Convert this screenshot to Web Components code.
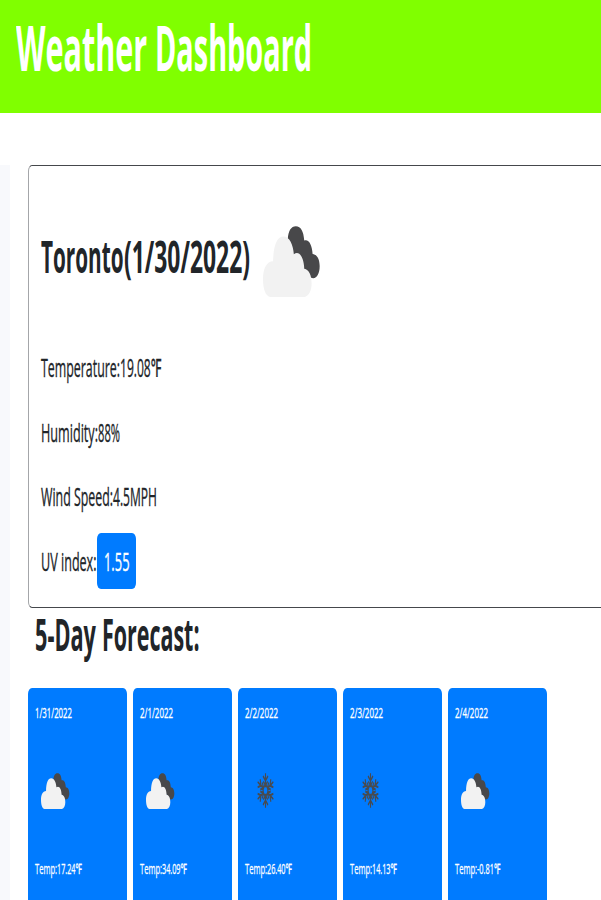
<!DOCTYPE html>
<html lang="en">
<head>
<meta charset="utf-8">
<title>Weather Dashboard</title>
<style>
html,body{margin:0;height:900px;overflow:hidden;background:#fff}
body{font-family:"Open Sans","Noto Sans",sans-serif;color:#212529}
</style>
</head>
<body>
<weather-app></weather-app>
<script>
const define = (name, html, ready) => customElements.define(name, class extends HTMLElement {
  constructor() {
    super();
    const t = document.createElement('template');
    t.innerHTML = html;
    this.attachShadow({mode: 'open'}).append(t.content.cloneNode(true));
  }
  connectedCallback() { if (ready) ready(this, this.shadowRoot); }
});

// Condensed one-line text: each "|"-separated part is scaled to its width in "w".
define('narrow-text', `<style>
:host{display:flex;white-space:pre;flex:none}
div{flex:none}
span{display:inline-block;transform-origin:0 50%}
</style>`, (el, root) => {
  const widths = el.getAttribute('w').split(',');
  el.getAttribute('text').split('|').forEach((part, i) => {
    const box = document.createElement('div');
    const s = document.createElement('span');
    s.textContent = part;
    box.append(s);
    root.append(box);
    const natural = s.getBoundingClientRect().width;
    box.style.width = widths[i] + 'px';
    s.style.transform = 'scaleX(' + widths[i] / natural + ')';
  });
});

define('cloud-icon', `<style>
:host{display:block;flex:none;width:28.5px;height:36px}svg{display:block;width:100%;height:100%}
</style><svg viewBox="24 33 170 211" preserveAspectRatio="none">
<path fill="#48484a" d="M98 72C99 48 108 34 122 34C137 34 145 49 147 76C160 71 170 87 172 116C185 117 193 132 193 152C193 174 185 188 174 188C163 188 159 179 155 166L100 130Z"/>
<path fill="#f2f2f2" d="M45 244C31 241 24 220 24 190C24 160 35 138 54 138C55 90 66 64 85 64C103 64 114 88 116 117C132 105 146 125 147 160C161 162 169 179 169 204C169 225 161 240 149 244Z"/></svg>`);

define('snow-icon', `<style>
:host{display:block;flex:none;width:17px;height:35px}svg{display:block;width:100%;height:100%}
</style><svg viewBox="-48 -52 96 104" preserveAspectRatio="none"><defs>
<path id="arm" d="M0 -12V-51M0 -29L-14 -43M0 -29L14 -43M0 -14L-12 -27M0 -14L12 -27M-8 -13H8"/></defs>
<g fill="none" stroke="#484b50" stroke-width="6.2"><use href="#arm"/><use href="#arm" transform="rotate(60)"/><use href="#arm" transform="rotate(120)"/><use href="#arm" transform="rotate(180)"/><use href="#arm" transform="rotate(240)"/><use href="#arm" transform="rotate(300)"/></g></svg>`);

define('page-header', `<style>
:host{display:block;box-sizing:border-box;height:113px;padding:0 0 0 16px;background:#80ff00;color:#fff;font-weight:700;font-size:63px;line-height:94px}
</style><slot></slot>`);

define('current-weather', `<style>
:host{display:block;box-sizing:border-box;width:700px;height:442.5px;padding:10px 0 0 12px;border:1px solid #a4a6a9;border-top-color:#45484c;border-bottom-color:#45484c;border-radius:4px/6px;font-size:25px;font-weight:500;line-height:64.5px;-webkit-text-stroke:.35px}
.head{display:flex;align-items:center;height:159px;font-size:44px;font-weight:700;line-height:72px;-webkit-text-stroke:0}
cloud-icon{width:57px;height:71px;margin:12px 0 0 13.5px}
.uv{display:flex;align-items:center}
.badge{box-sizing:border-box;width:38.5px;height:56px;line-height:57px;padding-left:7px;margin-left:.5px;border-radius:4px/6px;background:#007bff;color:#fff}
</style>
<div class="head"><narrow-text w="82.5,126" text="Toronto|(1/30/2022)"></narrow-text><cloud-icon></cloud-icon></div>
<narrow-text w="79,41.5" text="Temperature:|19.08℉"></narrow-text>
<narrow-text w="57,22" text="Humidity:|88%"></narrow-text>
<narrow-text w="33,39,44" text="Wind |Speed:|4.5MPH"></narrow-text>
<div class="uv"><narrow-text w="20,35.5" text="UV |index:"></narrow-text><div class="badge"><narrow-text w="25.5" text="1.55"></narrow-text></div></div>`);

define('forecast-card', `<style>
:host{display:block;box-sizing:border-box;width:98.5px;height:260px;padding:12.5px 0 0 6.5px;border-radius:4px/6px;background:#007bff;color:#fff;font-size:14.5px;font-weight:500;line-height:25px;-webkit-text-stroke:.3px}
.icon{display:flex;align-items:center;height:131px;padding-left:6.5px}
snow-icon{margin-left:6px}
</style><div class="d"></div><div class="icon"></div><div class="t"></div>`, (el, root) => {
  const make = (text, w) => `<narrow-text text="${text}" w="${w}"></narrow-text>`;
  const a = n => el.getAttribute(n);
  root.querySelector('.d').innerHTML = make(a('date'), a('date-w'));
  root.querySelector('.t').innerHTML = make('Temp:|' + a('temp') + '℉', '22,' + (a('temp-w') - 22));
  root.querySelector('.icon').innerHTML = a('sky') === 'snow' ? '<snow-icon></snow-icon>' : '<cloud-icon></cloud-icon>';
});

define('weather-app', `<style>
:host{display:block;height:900px;overflow:hidden}
.body{display:grid;grid-template-columns:9.5px 700px;column-gap:18.9px;margin-top:52px;height:735px}
aside{background:#f8f9fc}
.five{margin:0 0 28px 7px;font-size:44px;font-weight:700;line-height:52px}
.cards{display:flex;gap:6.5px}
</style>
<page-header><narrow-text w="139,157" text="Weather |Dashboard"></narrow-text></page-header>
<div class="body"><aside></aside><main>
<current-weather></current-weather>
<div class="five"><narrow-text w="66.5,97.5" text="5-Day |Forecast:"></narrow-text></div>
<div class="cards">
<forecast-card date="1/31/2022" date-w="37" temp="17.24" temp-w="47"></forecast-card>
<forecast-card date="2/1/2022" date-w="33" temp="34.09" temp-w="47"></forecast-card>
<forecast-card sky="snow" date="2/2/2022" date-w="33" temp="26.40" temp-w="47"></forecast-card>
<forecast-card sky="snow" date="2/3/2022" date-w="33" temp="14.13" temp-w="47"></forecast-card>
<forecast-card date="2/4/2022" date-w="33" temp="-0.81" temp-w="45.5"></forecast-card>
</div></main></div>`);
</script>
</body>
</html>
